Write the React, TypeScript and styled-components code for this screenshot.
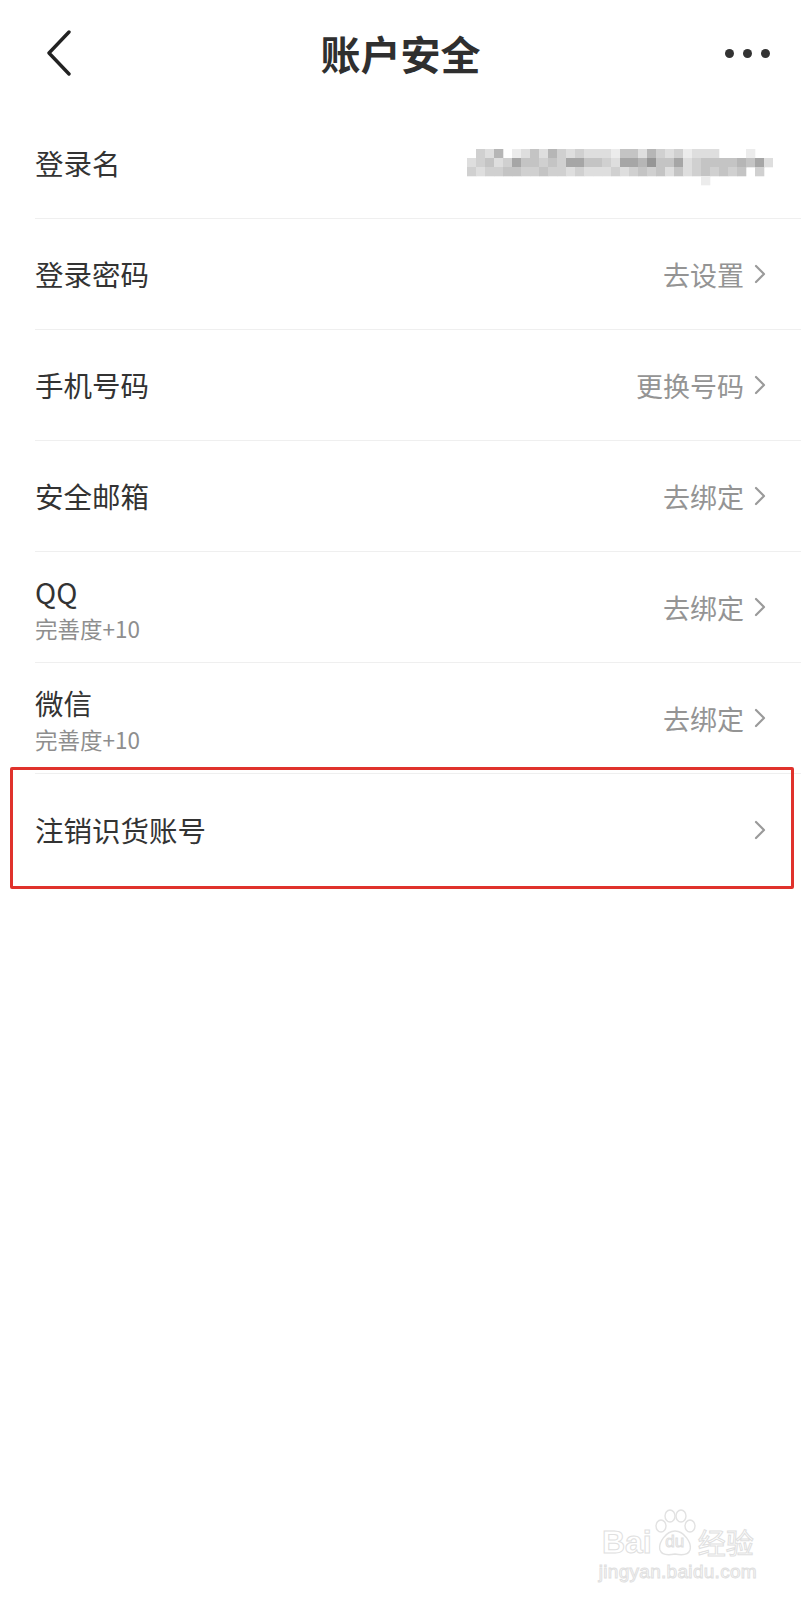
import React from 'react';
import styled, { createGlobalStyle } from 'styled-components';

const GlobalStyle = createGlobalStyle`
	html, body {
		margin: 0;
		padding: 0;
		background: #ffffff;
	}
	body {
		font-family: "Noto Sans CJK SC", "Noto Sans", sans-serif;
		color: #333333;
	}
`;

type Item = {
	label: string;
	sub?: string;
	action?: string;
	arrow?: boolean;
	masked?: boolean;
	marked?: boolean;
};

const items: Item[] = [
	{ label: '登录名', masked: true },
	{ label: '登录密码', action: '去设置', arrow: true },
	{ label: '手机号码', action: '更换号码', arrow: true },
	{ label: '安全邮箱', action: '去绑定', arrow: true },
	{ label: 'QQ', sub: '完善度+10', action: '去绑定', arrow: true },
	{ label: '微信', sub: '完善度+10', action: '去绑定', arrow: true },
	{ label: '注销识货账号', arrow: true, marked: true },
];

// grey levels of the mosaic that hides the login name (0 = empty)
const mosaic = [
	'0000000000000000000000000000000000',
	'0325012425323222144253231222000100',
	'2342364434366443266574462344445462',
	'3233443343323222323434242343434030',
	'0000000000000000000000000010000000',
];

function Mosaic() {
	const size = 9;
	const shades = ['', '#ececec', '#dedede', '#d0d0d0', '#c4c4c4', '#b6b6b6', '#a6a6a6', '#969696'];
	return (
		<svg width="308" height="46" viewBox="0 0 308 46">
			{mosaic.map((row, r) =>
				row.split('').map((c, i) =>
					c === '0' ? null : (
						<rect
							key={`${r}-${i}`}
							x={2 + i * size}
							y={r * size}
							width={size + 0.3}
							height={size + 0.3}
							fill={shades[Number(c)]}
						/>
					),
				),
			)}
		</svg>
	);
}

function Chevron() {
	return (
		<svg width="14" height="22" viewBox="0 0 14 22">
			<path d="M3 3 L11 11 L3 19" fill="none" stroke="#9a9a9a" strokeWidth="2.2" strokeLinecap="round" strokeLinejoin="round" />
		</svg>
	);
}

export default function App() {
	return (
		<Page>
			<GlobalStyle />
			<Header>
				<BackButton>
					<svg width="30" height="46" viewBox="0 0 30 46">
						<path d="M24 2 L4 23 L24 44" fill="none" stroke="#222222" strokeWidth="3.4" strokeLinecap="round" strokeLinejoin="round" />
					</svg>
				</BackButton>
				<Title>账户安全</Title>
				<MoreButton>
					<Dot />
					<Dot />
					<Dot />
				</MoreButton>
			</Header>
			<List>
				{items.map((item) => (
					<Row key={item.label} $last={!!item.marked}>
						<LabelGroup>
							<Label>{item.label}</Label>
							{item.sub && <SubLabel>{item.sub}</SubLabel>}
						</LabelGroup>
						<Trailing $masked={!!item.masked}>
							{item.masked && <Mosaic />}
							{item.action && <Action>{item.action}</Action>}
							{item.arrow && <Chevron />}
						</Trailing>
						{item.marked && <Highlight />}
					</Row>
				))}
			</List>
			<Watermark>
				<WatermarkLogo>
					<span>Bai</span>
					<Paw>
						<svg width="46" height="48" viewBox="0 0 46 48">
							<g fill="none" stroke="#e2e2e2" strokeWidth="1.4">
								<ellipse cx="9" cy="17" rx="5" ry="6" />
								<ellipse cx="18" cy="7" rx="5" ry="6" />
								<ellipse cx="29" cy="7" rx="5" ry="6" />
								<ellipse cx="38" cy="17" rx="5" ry="6" />
								<path d="M23 22 C14 22 6 34 8 41 C10 47 18 46 23 45 C28 46 36 47 38 41 C40 34 32 22 23 22 Z" />
							</g>
						</svg>
						<PawText>du</PawText>
					</Paw>
					<span>经验</span>
				</WatermarkLogo>
				<WatermarkUrl>jingyan.baidu.com</WatermarkUrl>
			</Watermark>
		</Page>
	);
}

const Page = styled.div`
	position: relative;
	width: 801px;
	min-height: 1599px;
	background: #ffffff;
	overflow: hidden;
`;

const Header = styled.div`
	height: 108px;
	display: grid;
	grid-template-columns: 1fr auto 1fr;
	align-items: center;
	padding: 0 31px;
	box-sizing: border-box;
`;

const BackButton = styled.div`
	display: flex;
	align-items: center;
	margin-left: 14px;
	margin-top: -2px;
`;

const Title = styled.div`
	font-size: 40px;
	font-weight: 700;
	color: #2f2f2f;
	margin-top: -2px;
`;

const MoreButton = styled.div`
	display: flex;
	justify-content: flex-end;
	gap: 9px;
	margin-top: -2px;
`;

const Dot = styled.span`
	width: 9px;
	height: 9px;
	border-radius: 50%;
	background: #333333;
`;

const List = styled.div`
	display: flex;
	flex-direction: column;
`;

const Row = styled.div<{ $last: boolean }>`
	position: relative;
	height: 111px;
	box-sizing: border-box;
	margin-left: 35px;
	padding-right: 34px;
	display: flex;
	align-items: center;
	justify-content: space-between;
	border-bottom: ${(p) => (p.$last ? 'none' : '1px solid #efefef')};
`;

const LabelGroup = styled.div`
	display: flex;
	flex-direction: column;
`;

const Label = styled.div`
	font-size: 28.5px;
	line-height: 38px;
	color: #333333;
`;

const SubLabel = styled.div`
	font-size: 22.5px;
	line-height: 28px;
	color: #8e8e8e;
	margin-top: 3px;
`;

const Trailing = styled.div<{ $masked: boolean }>`
	display: flex;
	align-items: center;
	gap: 9px;
	margin-right: ${(p) => (p.$masked ? '-6px' : '0')};
`;

const Action = styled.span`
	font-size: 27px;
	color: #949494;
`;

const Highlight = styled.div`
	position: absolute;
	top: -7px;
	bottom: -4px;
	left: -25px;
	right: 7px;
	border: 3px solid #e0322c;
	border-radius: 2px;
	pointer-events: none;
`;

const Watermark = styled.div`
	position: absolute;
	right: 44px;
	bottom: 16px;
	display: flex;
	flex-direction: column;
	align-items: center;
	color: transparent;
	-webkit-text-stroke: 1px #e0e0e0;
	font-family: "Liberation Sans", sans-serif;
`;

const WatermarkLogo = styled.div`
	display: flex;
	align-items: flex-end;
	font-size: 32px;
	font-weight: 700;
	line-height: 30px;
	span:last-child {
		font-family: "Noto Sans CJK SC", sans-serif;
		font-weight: 400;
		font-size: 28px;
	}
`;

const Paw = styled.div`
	position: relative;
	width: 46px;
	height: 48px;
`;

const PawText = styled.div`
	position: absolute;
	left: 0;
	right: 0;
	bottom: 6px;
	text-align: center;
	font-size: 17px;
	font-weight: 400;
	line-height: 18px;
`;

const WatermarkUrl = styled.div`
	font-size: 19px;
	margin-top: 4px;
	letter-spacing: 0.3px;
`;
